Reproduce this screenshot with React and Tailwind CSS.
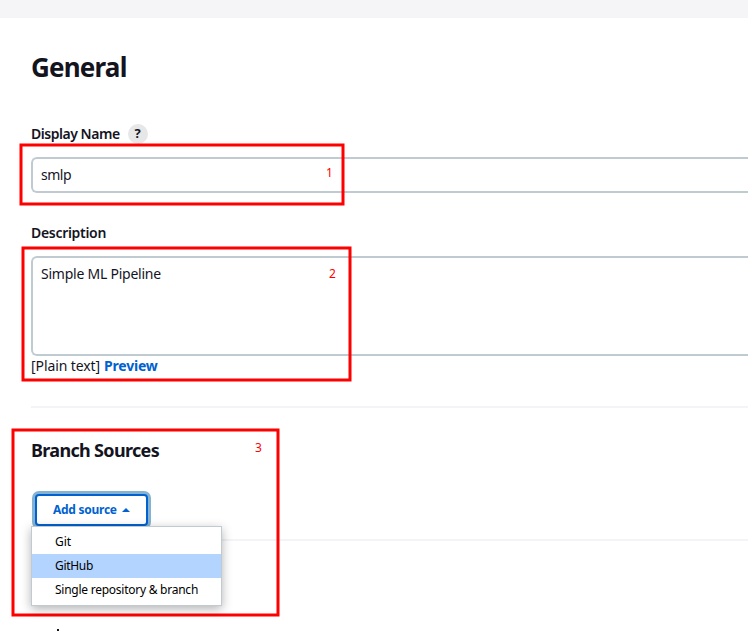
const ink = 'text-[#14141f]';

function Label({ children }) {
  return <span className={`block text-[14px] font-semibold leading-5 ${ink} whitespace-nowrap`}>{children}</span>;
}

function Annotations() {
  return (
    <div className="pointer-events-none absolute inset-0">
      <svg width="748" height="631" className="absolute inset-0" fill="none" stroke="#ff0000" strokeWidth="3">
        <rect x="21" y="145" width="322" height="59" />
        <rect x="23" y="248" width="327" height="132" />
        <rect x="13" y="430" width="265" height="185" />
      </svg>
      <span className="absolute left-[326px] top-[165px] text-[12px] leading-4 text-[#ff0000]">1</span>
      <span className="absolute left-[329px] top-[266px] text-[12px] leading-4 text-[#ff0000]">2</span>
      <span className="absolute left-[255px] top-[440px] text-[12px] leading-4 text-[#ff0000]">3</span>
    </div>
  );
}

function SourceMenu() {
  return (
    <ul className="absolute left-0 top-[35px] z-10 h-20 w-[191px] border border-[#bfcbd0] bg-white py-[3px] text-[12px] leading-6 text-black shadow-[0_3px_10px_rgba(0,0,0,0.3)]">
      <li className="h-6 pl-[23px] tracking-[-0.1px]">Git</li>
      <li className="h-6 bg-[#b3d4ff] pl-[23px] tracking-[-0.3px]">GitHub</li>
      <li className="h-6 whitespace-nowrap pl-[23px] tracking-[-0.25px]">Single repository &amp; branch</li>
    </ul>
  );
}

export default function App() {
  return (
    <main className="relative h-[631px] w-[748px] overflow-hidden bg-white font-['Noto_Sans',sans-serif]">
      <div className="h-[18px] bg-[#f5f5f8]" />
      <div className="flex flex-col pl-[31px]">
        <h1 className={`mt-[33px] text-[26px] font-bold leading-8 ${ink}`}>
          <span className="tracking-[-0.8px]">General</span>
        </h1>
        <div className="mt-[41px] flex h-5 items-center gap-2">
          <Label><span className="tracking-[-0.47px]">Display Name</span></Label>
          <span className={`flex size-5 items-center justify-center rounded-full bg-[#e7e7e8] text-[13px] font-bold ${ink}`}>?</span>
        </div>
        <div className={`mt-[13px] flex h-9 items-center rounded-l-[6px] border-2 border-r-0 border-[#bfcbd0] pb-[2px] pl-2 text-[14px] ${ink}`}>
          <span className="tracking-[-0.5px]">smlp</span>
        </div>
        <div className="mt-[30px] h-5"><Label><span className="tracking-[-0.3px]">Description</span></Label></div>
        <div className={`mt-[13px] h-[100px] rounded-l-[6px] border-2 border-r-0 border-[#bfcbd0] pl-2 pt-[6px] text-[14px] leading-5 ${ink}`}>
          <span className="tracking-[-0.24px]">Simple ML Pipeline</span>
        </div>
        <div className={`flex h-5 gap-1 text-[14px] leading-5 ${ink}`}>
          <span className="tracking-[-0.1px]">[Plain text]</span>
          <span className="font-bold tracking-[-0.2px] text-[#0061cf]">Preview</span>
        </div>
        <div className="mt-[30px] h-[2px] bg-[#f3f3f8]" />
        <h2 className={`mt-[30px] h-6 text-[18px] font-bold leading-6 ${ink}`}>
          <span className="tracking-[-0.67px]">Branch Sources</span>
        </h2>
        <div className="relative mt-[29px] h-12">
          <button className="ml-1 mt-[3px] flex h-8 w-[113px] items-center rounded-[4px] border-2 border-[#0061cf] bg-white pl-4 text-[12px] font-bold text-[#0061cf] shadow-[0_0_0_3px_#84b2d2]">
            <span className="tracking-[-0.27px]">Add source</span>
            <svg className="ml-[5px]" width="8" height="4" viewBox="0 0 8 4" fill="currentColor"><path d="M0 4 L4 0 L8 4Z" /></svg>
          </button>
          <SourceMenu />
        </div>
        <div className="h-[2px] bg-[#f3f3f8]" />
        <div className="ml-[26px] mt-[88px] h-[2px] w-[2px] bg-[#14141f]" />
      </div>
      <Annotations />
    </main>
  );
}
